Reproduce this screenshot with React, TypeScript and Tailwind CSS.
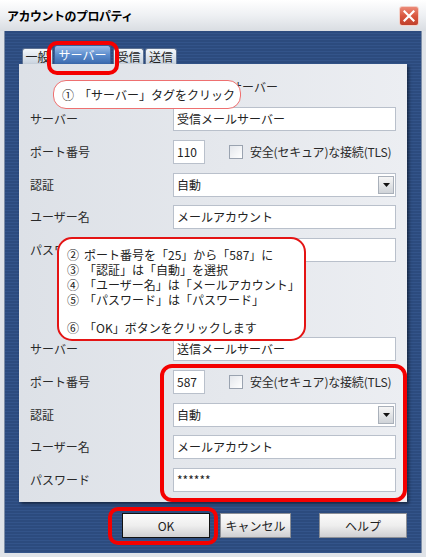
import React from 'react';

const font = "font-['Noto_Sans_CJK_JP','Noto_Sans',sans-serif]";

// Shared row sizes for the server panel
const labelCls = 'w-[143px] shrink-0 text-[12px] text-[#2a2a2a]';
const inputCls =
  'h-[24px] bg-white border border-[#b9c0cb] flex items-center pl-[3px] text-[12px] text-[#222] leading-none';

function TextRow({ label, value }: { label: string; value: string }) {
  return (
    <div className="flex items-center h-[24px]">
      <span className={labelCls}>{label}</span>
      <div className={`${inputCls} w-[223px]`}>{value}</div>
    </div>
  );
}

function PortRow({ value }: { value: string }) {
  return (
    <div className="flex items-center h-[24px]">
      <span className={labelCls}>ポート番号</span>
      <div className={`${inputCls} w-[32px]`}>{value}</div>
      <div className="ml-[24px] w-[14px] h-[14px] border border-[#9aa3b0] bg-linear-to-br from-[#e4e7ec] to-white" />
      <span className="ml-[7px] text-[12px] text-[#2a2a2a] tracking-[-0.2px]">安全(セキュア)な接続(TLS)</span>
    </div>
  );
}

function SelectRow({ value }: { value: string }) {
  return (
    <div className="flex items-center h-[24px]">
      <span className={labelCls}>認証</span>
      <div className={`${inputCls} w-[223px] justify-between`}>
        <span>{value}</span>
        <div className="mr-[1px] w-[16px] h-[18px] border border-[#a9b0ba] bg-linear-to-b from-[#f6f6f6] to-[#cfd3d8] flex items-center justify-center">
          <svg width="7" height="4" viewBox="0 0 7 4">
            <path d="M0 0 H7 L3.5 4 Z" fill="#111" />
          </svg>
        </div>
      </div>
    </div>
  );
}

function Section({
  title,
  server,
  port,
  password,
}: {
  title: string;
  server: string;
  port: string;
  password: string;
}) {
  return (
    <div className="flex flex-col">
      <div className="h-[16px] leading-[16px] pl-[140px] text-[12px] text-[#2a2a2a]">{title}</div>
      <div className="mt-[12px] flex flex-col gap-[8.75px]">
        <TextRow label="サーバー" value={server} />
        <PortRow value={port} />
        <SelectRow value="自動" />
        <TextRow label="ユーザー名" value="メールアカウント" />
        <TextRow label="パスワード" value={password} />
      </div>
    </div>
  );
}

function Tab({ label, active, width, ml }: { label: string; active?: boolean; width: string; ml: string }) {
  return (
    <div
      className={
        active
          ? `${ml} ${width} h-[19px] rounded-t-[3px] border border-b-0 border-[#3b5f96] bg-linear-to-b from-[#9cbde6] via-[#5b8ccd] to-[#3a69ad] text-white text-[12px] leading-[18px] text-center`
          : `${ml} ${width} h-[16px] rounded-t-[3px] border border-b-0 border-[#5f7393] bg-linear-to-b from-[#f4f7fa] to-[#c9d3df] text-[#222] text-[12px] leading-[16px] text-center`
      }
    >
      {label}
    </div>
  );
}

function Button({ label, width, primary }: { label: string; width: string; primary?: boolean }) {
  return (
    <div
      className={`${width} h-[25px] flex items-center justify-center text-[12px] text-[#222] bg-linear-to-b from-[#fbfbfb] via-[#eeeeee] to-[#cfcfd2] ${
        primary ? 'border border-[#111]' : 'border border-[#8c8f96]'
      }`}
    >
      {label}
    </div>
  );
}

// One numbered instruction line: circled digit, a gap, then the text
function Step({ n, text }: { n: string; text: string }) {
  return (
    <div className="flex">
      <span className="mr-[5px]">{n}</span>
      <span>{text}</span>
    </div>
  );
}

export default function App() {
  return (
    <div className={`relative w-[426px] h-[557px] overflow-hidden bg-[#dfe3e8] ${font}`}>
      {/* Title bar */}
      <div className="h-[31px] flex items-center justify-between pl-[7px] pr-[7px] bg-linear-to-b from-white via-[#eef0f3] to-[#d9dde2]">
        <span className="text-[12px] font-bold text-black tracking-[-0.5px]">アカウントのプロパティ</span>
        <div className="w-[20px] h-[20px] rounded-[3px] border border-[#f4d0c8] bg-linear-to-b from-[#eb8a78] via-[#d9573f] to-[#c0402c] flex items-center justify-center">
          <svg width="12" height="12" viewBox="0 0 12 12">
            <path d="M1.5 1.5 L10.5 10.5 M10.5 1.5 L1.5 10.5" stroke="#fff" strokeWidth="2.2" strokeLinecap="square" />
          </svg>
        </div>
      </div>

      {/* Body */}
      <div className="mx-[4px] h-[522px] border-l border-r border-[#7d8ea8] px-[14px] pt-[14px] flex flex-col bg-[repeating-linear-gradient(180deg,#2c4b7e_0px,#2c4b7e_2px,#33548a_2px,#33548a_3px)]">
        <div className="h-[19px] flex items-end">
          <Tab label="一般" width="w-[31px]" ml="ml-[3px]" />
          <Tab label="サーバー" width="w-[57px]" ml="ml-[1px]" active />
          <Tab label="受信" width="w-[31px]" ml="ml-[2px]" />
          <Tab label="送信" width="w-[32px]" ml="ml-[1px]" />
        </div>

        <div className="h-[438px] pt-[15px] pl-[11px] bg-linear-to-r from-[#dde1e7] to-[#eceef2] shadow-[2px_2px_3px_rgba(0,0,0,0.45)]">
          <Section title="受信メールサーバー" server="受信メールサーバー" port="110" password="" />
          <div className="mt-[47px]">
            <Section title="送信メールサーバー" server="送信メールサーバー" port="587" password="******" />
          </div>
        </div>

        <div className="mt-[11px] flex justify-end">
          <Button label="OK" width="w-[88px]" primary />
          <div className="ml-[10px]">
            <Button label="キャンセル" width="w-[71px]" />
          </div>
          <div className="ml-[28px]">
            <Button label="ヘルプ" width="w-[88px]" />
          </div>
        </div>
      </div>

      {/* Callout 1 */}
      <div className="absolute left-[53px] top-[80px] w-[188px] h-[29px] rounded-[13px] border-[1.5px] border-[#ee7070] bg-white flex items-center pl-[8px] text-[12px] text-[#222] whitespace-nowrap">
        <Step n="①" text="「サーバー」タグをクリック" />
      </div>

      {/* Callout 2 */}
      <div className="absolute left-[57px] top-[237px] w-[249px] h-[104px] rounded-[15px] border-2 border-[#e41414] bg-white pl-[8px] pt-[8px] text-[12px] leading-[15px] text-[#222] whitespace-nowrap">
        <Step n="②" text="ポート番号を「25」から「587」に" />
        <Step n="③" text="「認証」は「自動」を選択" />
        <Step n="④" text="「ユーザー名」は「メールアカウント」" />
        <Step n="⑤" text="「パスワード」は「パスワード」" />
        <div className="h-[13px]" />
        <Step n="⑥" text="「OK」ボタンをクリックします" />
      </div>

      {/* Red highlight rings */}
      <div className="absolute left-[47px] top-[41px] w-[72px] h-[34px] rounded-[10px] border-4 border-[#f40000]" />
      <div className="absolute left-[160px] top-[364px] w-[247px] h-[138px] rounded-[12px] border-4 border-[#f40000]" />
      <div className="absolute left-[108px] top-[507px] w-[110px] h-[38px] rounded-[10px] border-4 border-[#f40000]" />
    </div>
  );
}
